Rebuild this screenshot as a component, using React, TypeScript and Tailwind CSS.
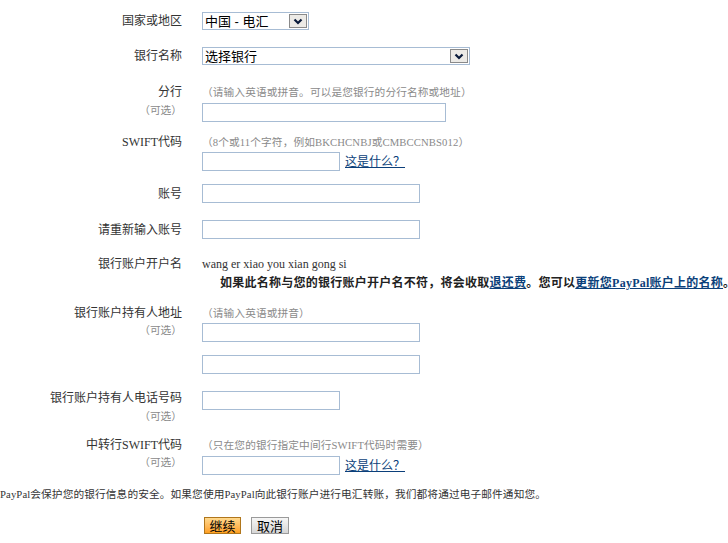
import React from "react";

const F = { fontFamily: '"Liberation Serif", "Noto Sans CJK SC", serif' };

function Chevron() {
  return (
    <svg width="10" height="7" viewBox="0 0 10 7">
      <polyline points="1.5,1.5 5,5 8.5,1.5" fill="none" stroke="#0a1a3a" strokeWidth="2.2" />
    </svg>
  );
}

function FakeSelect({ text, w }: { text: string; w: string }) {
  return (
    <div className={`${w} h-[18px] border border-[#a7bcd4] bg-white flex items-center justify-between pl-[2px] pr-[1px]`}>
      <span className="text-[13px] leading-none text-black" style={{ fontFamily: '"Liberation Sans", "Noto Sans CJK SC", sans-serif' }}>{text}</span>
      <div className="w-[18px] h-[14px] bg-[#eceae6] border border-[#8a8a8a] flex items-center justify-center">
        <Chevron />
      </div>
    </div>
  );
}

function Input({ w }: { w: string }) {
  return <div className={`${w} h-[19px] border border-[#a7bcd4] bg-white`} />;
}

function Hint({ children }: { children: React.ReactNode }) {
  return <div className="h-[14px] leading-[14px] text-[10.7px] tracking-[0.1px] text-[#8a8a8a] whitespace-nowrap">{children}</div>;
}

function Opt() {
  return <div className="h-[14px] leading-[14px] text-[10.7px] text-[#8a8a8a]">（可选）</div>;
}

function Label({ children }: { children: React.ReactNode }) {
  return <div className="h-[14px] leading-[14px] text-[12px] text-[#333]">{children}</div>;
}

function Link({ children }: { children: React.ReactNode }) {
  return <span className="text-[12px] text-[#0b3f7a] underline">{children}</span>;
}

export default function App() {
  return (
    <div className="w-[728px] h-[543px] bg-white overflow-hidden relative" style={F}>
      {/* Row 1 */}
      <div className="flex items-center mt-[12px]">
        <div className="w-[182px] text-right"><Label>国家或地区</Label></div>
        <div className="ml-[20px]"><FakeSelect text="中国 - 电汇" w="w-[107px]" /></div>
      </div>
      {/* Row 2 */}
      <div className="flex items-center mt-[17px]">
        <div className="w-[182px] text-right"><Label>银行名称</Label></div>
        <div className="ml-[20px]"><FakeSelect text="选择银行" w="w-[268px]" /></div>
      </div>
      {/* Row 3 */}
      <div className="flex items-start mt-[20px]">
        <div className="w-[182px] text-right">
          <Label>分行</Label>
          <div className="mt-[4px]"><Opt /></div>
        </div>
        <div className="ml-[20px]">
          <Hint>（请输入英语或拼音。可以是您银行的分行名称或地址）</Hint>
          <div className="mt-[4px]"><Input w="w-[244px]" /></div>
        </div>
      </div>
      {/* Row 4 */}
      <div className="flex items-start mt-[13px]">
        <div className="w-[182px] text-right"><Label>SWIFT代码</Label></div>
        <div className="ml-[20px]">
          <Hint>（8个或11个字符，例如BKCHCNBJ或CMBCCNBS012）</Hint>
          <div className="mt-[3px] flex items-center gap-[5px]">
            <Input w="w-[138px]" />
            <Link>这是什么？</Link>
          </div>
        </div>
      </div>
      {/* Row 5 */}
      <div className="flex items-center mt-[13px]">
        <div className="w-[182px] text-right"><Label>账号</Label></div>
        <div className="ml-[20px]"><Input w="w-[218px]" /></div>
      </div>
      {/* Row 6 */}
      <div className="flex items-center mt-[17px]">
        <div className="w-[182px] text-right"><Label>请重新输入账号</Label></div>
        <div className="ml-[20px]"><Input w="w-[218px]" /></div>
      </div>
      {/* Row 7 */}
      <div className="flex items-start mt-[18px]">
        <div className="w-[182px] text-right"><Label>银行账户开户名</Label></div>
        <div className="ml-[20px]">
          <div className="h-[14px] leading-[14px] text-[12px] text-[#333] whitespace-nowrap">wang er xiao you xian gong si</div>
        </div>
      </div>
      <div className="mt-[5px] pl-[220px] h-[14px] leading-[14px] text-[12px] font-bold tracking-[0.25px] text-[#222] whitespace-nowrap">
        如果此名称与您的银行账户开户名不符，将会收取<Link>退还费</Link>。您可以<Link>更新您PayPal账户上的名称</Link>。
      </div>
      {/* Row 8 */}
      <div className="flex items-start mt-[16px]">
        <div className="w-[182px] text-right">
          <Label>银行账户持有人地址</Label>
          <div className="mt-[3px]"><Opt /></div>
        </div>
        <div className="ml-[20px]">
          <Hint>（请输入英语或拼音）</Hint>
          <div className="mt-[3px]"><Input w="w-[218px]" /></div>
          <div className="mt-[13px]"><Input w="w-[218px]" /></div>
        </div>
      </div>
      {/* Row 9 */}
      <div className="flex items-start mt-[17px]">
        <div className="w-[182px] text-right">
          <Label>银行账户持有人电话号码</Label>
          <div className="mt-[4px]"><Opt /></div>
        </div>
        <div className="ml-[20px]"><Input w="w-[138px]" /></div>
      </div>
      {/* Row 10 */}
      <div className="flex items-start mt-[15px]">
        <div className="w-[182px] text-right">
          <Label>中转行SWIFT代码</Label>
          <div className="mt-[3px]"><Opt /></div>
        </div>
        <div className="ml-[20px]">
          <Hint>（只在您的银行指定中间行SWIFT代码时需要）</Hint>
          <div className="mt-[4px] flex items-center gap-[5px]">
            <Input w="w-[138px]" />
            <Link>这是什么？</Link>
          </div>
        </div>
      </div>
      {/* Footer */}
      <div className="mt-[12px] h-[14px] leading-[14px] text-[10.7px] tracking-[0.1px] text-[#333] whitespace-nowrap">
        PayPal会保护您的银行信息的安全。如果您使用PayPal向此银行账户进行电汇转账，我们都将通过电子邮件通知您。
      </div>
      <div className="mt-[16px] pl-[204px] flex gap-[10px]">
        <button className="w-[37px] h-[17px] border border-[#b0761c] bg-gradient-to-b from-[#ffd98c] to-[#ff9f1a] text-[13px] leading-none text-black flex items-center justify-center" style={{ fontFamily: '"Noto Sans CJK SC", sans-serif' }}>继续</button>
        <button className="w-[38px] h-[17px] border border-[#9a9a9a] bg-gradient-to-b from-[#f6f6f6] to-[#d6d6d6] text-[13px] leading-none text-black flex items-center justify-center" style={{ fontFamily: '"Noto Sans CJK SC", sans-serif' }}>取消</button>
      </div>
    </div>
  );
}
